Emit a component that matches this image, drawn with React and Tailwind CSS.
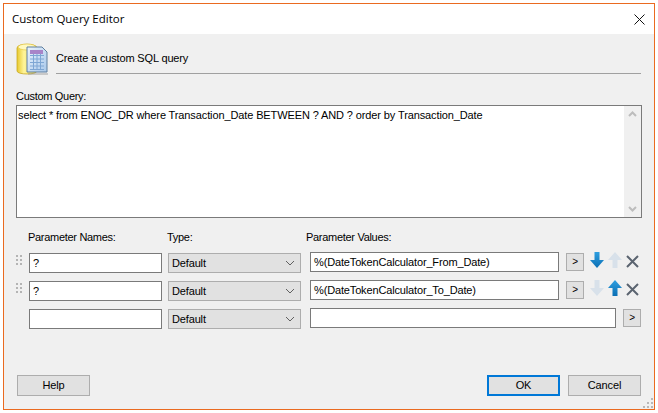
const sans = "font-['Liberation_Sans',Arial,sans-serif]"

function DbIcon() {
  return (
    <svg width="32" height="33" viewBox="0 0 32 33" className="shrink-0">
      <defs>
        <linearGradient id="cyl" x1="0" x2="1" y1="0" y2="0">
          <stop offset="0" stopColor="#e8c92e" />
          <stop offset="0.35" stopColor="#fff59a" />
          <stop offset="1" stopColor="#f2d84a" />
        </linearGradient>
        <linearGradient id="doc" x1="0" x2="1" y1="0" y2="1">
          <stop offset="0" stopColor="#eaf3fd" />
          <stop offset="1" stopColor="#a9c8ea" />
        </linearGradient>
      </defs>
      <path d="M1 6 C1 1 21 1 21 6 L21 29 C21 33 1 33 1 29 Z" fill="url(#cyl)" stroke="#c9a923" strokeWidth="0.8" />
      <ellipse cx="11" cy="5" rx="9" ry="3" fill="#fff9c0" stroke="#e0c33a" strokeWidth="0.6" />
      <path d="M11 5 H26 L31 10 V30 H11 Z" fill="url(#doc)" stroke="#5f7f9f" strokeWidth="1" />
      <rect x="14" y="8" width="13" height="4" fill="#a884c8" />
      <path d="M14 13.5 H28 M14 17 H28 M14 20.5 H28 M14 24 H28 M14 27.5 H28 M17.5 12 V28 M21 12 V28 M24.500 12 V28" stroke="#7ea6d4" strokeWidth="1" fill="none" />
      <path d="M12 31 H32 V33 H12 Z" fill="#9a9a9a" opacity="0.45" />
    </svg>
  )
}

function Grip() {
  return (
    <svg width="6" height="10" viewBox="0 0 6 10" className="mt-[2px] shrink-0" fill="#b4b4b4">
      <rect x="0" y="0" width="2" height="2" /><rect x="4" y="0" width="2" height="2" />
      <rect x="0" y="4" width="2" height="2" /><rect x="4" y="4" width="2" height="2" />
      <rect x="0" y="8" width="2" height="2" /><rect x="4" y="8" width="2" height="2" />
    </svg>
  )
}

function Arrow({ up, active }) {
  const d = up
    ? 'M7 0 L14 8 H9.500 V16 H4.500 V8 H0 Z'
    : 'M4.500 0 H9.500 V8 H14 L7 16 L0 8 H4.500 Z'
  return (
    <svg width="14" height="16" viewBox="0 0 14 16" className="shrink-0">
      {active ? (
        <>
          <defs>
            <linearGradient id={up ? 'au' : 'ad'} x1="0" x2="0" y1="0" y2="1">
              <stop offset="0" stopColor="#2f9fe0" />
              <stop offset="1" stopColor="#0b6fb4" />
            </linearGradient>
          </defs>
          <path d={d} fill={`url(#${up ? 'au' : 'ad'})`} />
        </>
      ) : (
        <path d={d} fill="#d8e1ea" />
      )}
    </svg>
  )
}

function Remove() {
  return (
    <svg width="13" height="13" viewBox="0 0 13 13" className="shrink-0">
      <path d="M1 1 L12 12 M12 1 L1 12" stroke="#5b6470" strokeWidth="2" fill="none" />
    </svg>
  )
}

function Combo() {
  return (
    <div className="flex h-[20px] w-[133px] shrink-0 items-center justify-between border border-[#adadad] bg-[#e1e1e1] pl-[3px] pr-[5px]">
      <span>Default</span>
      <svg width="10" height="6" viewBox="0 0 10 6"><path d="M1 1 L5 5 L9 1" stroke="#606060" fill="none" /></svg>
    </div>
  )
}

function TextBox({ w, children }) {
  return (
    <div className={`flex h-[20px] shrink-0 items-center border border-[#7a7a7a] bg-white pl-[3px] ${w}`}>{children}</div>
  )
}

function Browse() {
  return (
    <div className="flex h-[18px] w-[18px] shrink-0 items-center justify-center border border-[#adadad] bg-[#e1e1e1] text-[10px] leading-none">
      &gt;
    </div>
  )
}

function ParamRow({ name, value, grip, downOn, upOn }) {
  return (
    <div className="flex h-[20px] items-start">
      <div className="w-[13px] shrink-0">{grip && <Grip />}</div>
      <TextBox w="w-[133px]">{name}</TextBox>
      <div className="w-[6px] shrink-0" />
      <Combo />
      <div className="w-[9px] shrink-0" />
      {grip ? (
        <>
          <div className="-mt-[1px]"><TextBox w="w-[249px]">{value}</TextBox></div>
          <div className="ml-[7px]"><Browse /></div>
          <div className="-mt-[1px] ml-[6px] flex items-start">
            <Arrow active={downOn} />
            <div className="ml-[4px]"><Arrow up active={upOn} /></div>
            <div className="ml-[4px] mt-[3px]"><Remove /></div>
          </div>
        </>
      ) : (
        <>
          <div className="-mt-[1px]"><TextBox w="w-[306px]" /></div>
          <div className="ml-[7px]"><Browse /></div>
        </>
      )}
    </div>
  )
}

function PushButton({ children, primary }) {
  return (
    <div className={`flex h-[21px] w-[73px] items-center justify-center bg-[#e1e1e1] ${primary ? 'border-2 border-[#0078d7]' : 'border border-[#adadad]'}`}>
      {children}
    </div>
  )
}

export default function App() {
  return (
    <div className={`h-[413px] w-[658px] overflow-hidden bg-white pb-[3px] pl-[3px] pr-[3px] pt-[3px] text-[11px] leading-none tracking-[-0.15px] text-black ${sans}`}>
      <div className="flex h-full flex-col border border-[#ea6a20] bg-[#f0f0f0]">
        <div className="flex h-[30px] shrink-0 items-center justify-between bg-white pl-[8px] pr-[9px] font-['Open_Sans',sans-serif] text-[11.5px] tracking-normal">
          <span>Custom Query Editor</span>
          <svg width="11" height="11" viewBox="0 0 11 11"><path d="M0.500 0.500 L10.500 10.500 M10.500 0.500 L0.500 10.500" stroke="#111" fill="none" /></svg>
        </div>

        <div className="flex flex-1 flex-col pl-[12px] pr-[12px]">
          <div className="flex h-[33px] items-start pr-[1px] pt-[8px]">
            <DbIcon />
            <div className="ml-[8px] flex h-[32px] flex-1 flex-col justify-between">
              <div className="flex h-[31px] items-center pt-[2px]">Create a custom SQL query</div>
              <div className="h-[1px] bg-[#a0a0a0]" />
            </div>
          </div>

          <div className="mt-[23px] flex h-[12px] items-center tracking-[-0.3px]">Custom Query:</div>
          <div className="mt-[3px] flex h-[113px] w-[626px] justify-between border border-[#7a7a7a] bg-white">
            <div className="pl-[1px] pt-[4px] tracking-[-0.115px]">select * from ENOC_DR where Transaction_Date BETWEEN ? AND ? order by Transaction_Date</div>
            <div className="flex w-[17px] flex-col items-center justify-between bg-[#f0f0f0] py-[5px]">
              <svg width="9" height="6" viewBox="0 0 9 6"><path d="M1 5 L4.500 1.500 L8 5" stroke="#bdbdbd" strokeWidth="2" fill="none" /></svg>
              <svg width="9" height="6" viewBox="0 0 9 6"><path d="M1 1 L4.500 4.500 L8 1" stroke="#bdbdbd" strokeWidth="2" fill="none" /></svg>
            </div>
          </div>

          <div className="mt-[13px] flex h-[13px] items-center pl-[12px] tracking-[-0.3px]">
            <span className="w-[139px]">Parameter Names:</span>
            <span className="w-[139px]">Type:</span>
            <span>Parameter Values:</span>
          </div>

          <div className="mt-[9px] flex flex-col gap-[8px]">
            <ParamRow grip name="?" value="%(DateTokenCalculator_From_Date)" downOn />
            <ParamRow grip name="?" value="%(DateTokenCalculator_To_Date)" upOn />
            <ParamRow />
          </div>

          <div className="mt-[46px] flex w-[625px] pl-[1px]">
            <PushButton>Help</PushButton>
            <div className="flex-1" />
            <PushButton primary>OK</PushButton>
            <div className="ml-[8px]"><PushButton>Cancel</PushButton></div>
          </div>
        </div>

        <div className="relative">
          <svg width="10" height="10" viewBox="0 0 10 10" className="absolute bottom-[1px] right-[1px]" fill="#b8b8b8">
            <rect x="8" y="0" width="2" height="2" /><rect x="4" y="4" width="2" height="2" /><rect x="8" y="4" width="2" height="2" />
            <rect x="0" y="8" width="2" height="2" /><rect x="4" y="8" width="2" height="2" /><rect x="8" y="8" width="2" height="2" />
          </svg>
        </div>
      </div>
    </div>
  )
}
